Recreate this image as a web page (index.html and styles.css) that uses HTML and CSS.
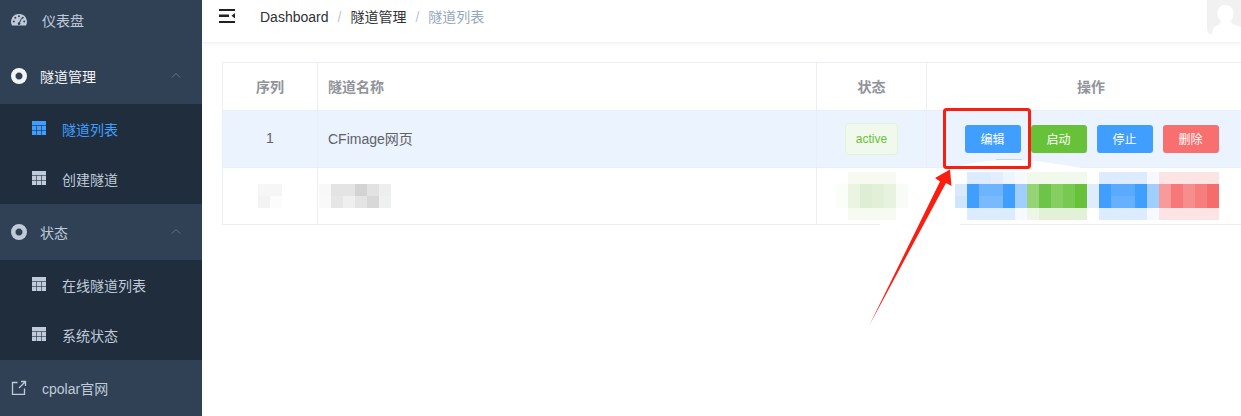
FILE: index.html
```html
<!DOCTYPE html>
<html lang="zh-CN">
<head>
    <meta charset="UTF-8">
    <meta name="viewport" content="width=device-width, initial-scale=1.0">
    <title>隧道列表</title>
    <link rel="stylesheet" href="styles.css">
</head>
<body>
    <div class="sidebar">
        <a class="menu-item" href="#dashboard">
            <svg class="menu-icon" viewBox="0 0 16 16"><path fill-rule="evenodd" d="M8 2a7.500 7.500 0 0 0-8 7.500c0 1.500.4 2.800 1 4h14c.6-1.200 1-2.500 1-4A7.500 7.500 0 0 0 8 2zM8 3.300a1 1 0 1 1 0 2 1 1 0 0 1 0-2zM4.300 4.800a1 1 0 1 1 0 2 1 1 0 0 1 0-2zM11.700 4.800a1 1 0 1 1 0 2 1 1 0 0 1 0-2zM2.800 8.500a1 1 0 1 1 0 2 1 1 0 0 1 0-2zM13.200 8.500a1 1 0 1 1 0 2 1 1 0 0 1 0-2zM10.200 6l.8.4-2 4.300a1.300 1.300 0 1 1-.9-.4z"/></svg>
            <span>仪表盘</span>
        </a>

        <div class="menu-title active-title">
            <svg class="menu-icon" viewBox="0 0 16 16"><path fill-rule="evenodd" d="M8 0a8 8 0 1 0 0 16A8 8 0 0 0 8 0zM8 4.500a3.500 3.500 0 1 1 0 7 3.500 3.500 0 0 1 0-7z"/><path class="buoy-band" d="M3 1.800 5.800 5.600 5 6.200 1.600 3.400zM13 1.800 10.200 5.600 11 6.200 14.400 3.400zM3 14.200 5.800 10.400 5 9.800 1.600 12.600zM13 14.200 10.200 10.400 11 9.800 14.400 12.600z"/></svg>
            <span>隧道管理</span>
            <svg class="chevron" viewBox="0 0 10 5"><path d="M.5 4.700 5 .6l4.500 4.100"/></svg>
        </div>
        <div class="submenu">
            <a class="sub-item current" href="#list">
                <svg class="table-icon" viewBox="0 0 14 14"><path d="M0 0h14v14H0z"/><path class="grid-line" d="M0 4.500h14M0 9.500h14M4.500 4.500V14M9.500 4.500V14"/></svg>
                <span>隧道列表</span>
            </a>
            <a class="sub-item" href="#create">
                <svg class="table-icon" viewBox="0 0 14 14"><path d="M0 0h14v14H0z"/><path class="grid-line" d="M0 4.500h14M0 9.500h14M4.500 4.500V14M9.500 4.500V14"/></svg>
                <span>创建隧道</span>
            </a>
        </div>

        <div class="menu-title">
            <svg class="menu-icon" viewBox="0 0 16 16"><path fill-rule="evenodd" d="M8 0a8 8 0 1 0 0 16A8 8 0 0 0 8 0zM8 4.500a3.500 3.500 0 1 1 0 7 3.500 3.500 0 0 1 0-7z"/><path class="buoy-band" d="M3 1.800 5.800 5.600 5 6.200 1.600 3.400zM13 1.800 10.200 5.600 11 6.200 14.400 3.400zM3 14.200 5.800 10.400 5 9.800 1.600 12.600zM13 14.200 10.200 10.400 11 9.800 14.400 12.600z"/></svg>
            <span>状态</span>
            <svg class="chevron" viewBox="0 0 10 5"><path d="M.5 4.700 5 .6l4.500 4.100"/></svg>
        </div>
        <div class="submenu">
            <a class="sub-item" href="#online">
                <svg class="table-icon" viewBox="0 0 14 14"><path d="M0 0h14v14H0z"/><path class="grid-line" d="M0 4.500h14M0 9.500h14M4.500 4.500V14M9.500 4.500V14"/></svg>
                <span>在线隧道列表</span>
            </a>
            <a class="sub-item" href="#status">
                <svg class="table-icon" viewBox="0 0 14 14"><path d="M0 0h14v14H0z"/><path class="grid-line" d="M0 4.500h14M0 9.500h14M4.500 4.500V14M9.500 4.500V14"/></svg>
                <span>系统状态</span>
            </a>
        </div>

        <a class="menu-item" href="#cpolar">
            <svg class="menu-icon link-icon" viewBox="0 0 16 16"><path d="M6.500 2.500H1.500v11.800h12V8.500M8 8l6.500-6.500M10 1.500h4.500V6"/></svg>
            <span>cpolar官网</span>
        </a>
    </div>

    <div class="main">
        <div class="navbar">
            <svg class="hamburger" viewBox="0 0 16 14"><path d="M0 0h16v2H0zM0 5.500h10v2.500H0zM0 12h16v2H0zM16 4v5.500l-3.500-2.700z"/></svg>
            <div class="breadcrumb">
                <span>Dashboard</span><i>/</i><span>隧道管理</span><i>/</i><span class="last">隧道列表</span>
            </div>
            <svg class="avatar" viewBox="0 0 34 35"><path d="M0 0h34v35H6a6 6 0 0 1-6-6z" fill="#f1f1f1"/><path d="M18 5c-5 0-7.500 3.500-7.500 8 0 3 1 6 3 8 .6 2.500-2 4-4.500 5-2.500 1-3.500 3-4 7l-.3 2H34v-8c-3-1.500-9.500-2-10.500-6 2-2 3-5 3-8 0-4.500-3.500-8-8.500-8z" fill="#fff"/></svg>
        </div>

        <div class="content">
            <table class="tunnel-table">
                <colgroup>
                    <col class="col-index"><col class="col-name"><col class="col-state"><col class="col-actions">
                </colgroup>
                <thead>
                    <tr>
                        <th>序列</th>
                        <th class="left">隧道名称</th>
                        <th>状态</th>
                        <th>操作</th>
                    </tr>
                </thead>
                <tbody>
                    <tr class="highlight">
                        <td>1</td>
                        <td class="left">CFimage网页</td>
                        <td class="tag-cell"><span class="tag">active</span></td>
                        <td>
                            <div class="actions">
                                <button type="button" class="btn blue">编辑</button>
                                <button type="button" class="btn green">启动</button>
                                <button type="button" class="btn blue">停止</button>
                                <button type="button" class="btn red">删除</button>
                            </div>
                        </td>
                    </tr>
                    <tr class="blurred">
                        <td>
                            <svg class="mosaic" width="24" height="24" viewBox="0 0 2 2"><path fill="#f6f6f6" d="M0 0h2v1H0z"/><path fill="#f3f3f3" d="M0 1h1v1H0z"/><path fill="#fbfcfb" d="M1 1h1v1H1z"/></svg>
                        </td>
                        <td class="name-blur">
                            <svg class="mosaic" width="72" height="24" viewBox="0 0 6 2"><path fill="#f8f8f8" d="M0 0h1v1H0z"/><path fill="#e4e4e4" d="M1 0h2v1H1z"/><path fill="#d3d3d3" d="M3 0h1v1H3z"/><path fill="#e2e2e2" d="M4 0h1v1H4z"/><path fill="#eeeeee" d="M5 0h1v1H5z"/><path fill="#f9f9f9" d="M0 1h1v1H0z"/><path fill="#e6e6e6" d="M1 1h1v1H1z"/><path fill="#efefef" d="M2 1h1v1H2z"/><path fill="#e4e4e4" d="M3 1h1v1H3z"/><path fill="#d8d8d8" d="M4 1h1v1H4z"/><path fill="#eff0f0" d="M5 1h1v1H5z"/></svg>
                        </td>
                        <td>
                            <svg class="mosaic" width="72" height="48" viewBox="0 0 6 4"><path fill="#f6faf1" d="M1 0h4v1H1zM1 3h4v1H1z"/><path fill="#fbfdf9" d="M0 1h1v2H0z"/><path fill="#eaf4e1" d="M1 1h1v2H1z"/><path fill="#deeed4" d="M2 1h1v2H2z"/><path fill="#e2f0d8" d="M3 1h1v2H3z"/><path fill="#e8f3df" d="M4 1h1v2H4z"/><path fill="#f9fcf6" d="M5 1h1v2H5z"/></svg>
                        </td>
                        <td class="actions-blur">
                            <svg class="mosaic" width="264" height="48" viewBox="0 0 22 4">
                                <path fill="#dcebfd" d="M1 0h2v1H1zM12 0h4v1h-4zM1 3h4v1H1zM12 3h4v1h-4z"/>
                                <path fill="#e2eefd" d="M3 0h1v1H3z"/>
                                <path fill="#edf5fe" d="M4 0h1v1H4z"/>
                                <path fill="#f6fafe" d="M5 0h1v1H5zM16 0h1v1h-1zM5 3h1v1H5zM16 3h1v1h-1z"/>
                                <path fill="#f1f8ec" d="M6 0h5v1H6z"/>
                                <path fill="#e3f1d9" d="M7 3h4v1H7z"/>
                                <path fill="#edf6e7" d="M6 3h1v1H6z"/>
                                <path fill="#fde4e4" d="M17 0h5v1h-5zM17 3h5v1h-5z"/>
                                <path fill="#d8e9fd" d="M0 1h1v1H0z"/>
                                <path fill="#cfe4fd" d="M0 2h1v1H0z"/>
                                <path fill="#409eff" d="M1 1h1v2H1zM4 1h1v2H4zM12 1h1v2h-1zM15 1h1v2h-1z"/>
                                <path fill="#6db4ff" d="M2 1h2v1H2z"/>
                                <path fill="#79baff" d="M2 2h2v1H2z"/>
                                <path fill="#a0cfff" d="M5 1h1v2H5zM16 1h1v2h-1z"/>
                                <path fill="#95d475" d="M6 1h1v2H6z"/>
                                <path fill="#6ec449" d="M7 1h1v2H7z"/>
                                <path fill="#85cf60" d="M8 1h1v2H8z"/>
                                <path fill="#77c951" d="M9 1h1v2H9z"/>
                                <path fill="#67c23a" d="M10 1h1v2h-1z"/>
                                <path fill="#deecfc" d="M11 1h1v2h-1z"/>
                                <path fill="#5aabff" d="M13 1h2v1h-2z"/>
                                <path fill="#66b1ff" d="M13 2h2v1h-2z"/>
                                <path fill="#f99a9a" d="M17 1h1v2h-1z"/>
                                <path fill="#f67878" d="M18 1h1v2h-1z"/>
                                <path fill="#f78e8e" d="M19 1h1v2h-1z"/>
                                <path fill="#f67e7e" d="M20 1h1v2h-1z"/>
                                <path fill="#f56c6c" d="M21 1h1v2h-1z"/>
                            </svg>
                        </td>
                    </tr>
                </tbody>
            </table>
        </div>
    </div>

    <!-- annotation drawn on top of the screenshot -->
    <svg class="annotation" width="1241" height="416" viewBox="0 0 1241 416">
        <path fill="#fff" d="M948 171C960 164 982 160 1010 160 1040 160 1060 165 1082 168H1241V171zM880 222H960V226H880z"/>
        <path fill="#bcd7fb" d="M996 159h26v1h-26z"/>
        <rect x="944.500" y="109.500" width="85" height="58" rx="2" fill="none" stroke="#fb1d10" stroke-width="3"/>
        <path fill="#fb1d10" d="M869.500 325 940 181.500 935 178 950 169.500 951.500 186 946 183z"/>
    </svg>
</body>
</html>
```

FILE: styles.css
```css
body {
    margin: 0;
    height: 100vh;
    display: flex;
    overflow: hidden;
    font-family: "Liberation Sans", "Noto Sans CJK SC", sans-serif;
    font-size: 14px;
    background-color: #ffffff;
}

a {
    text-decoration: none;
}

/* sidebar */

.sidebar {
    width: 202px;
    flex-shrink: 0;
    margin-top: -8px;
    background-color: #304156;
    color: #bfcbd9;
}

.menu-item,
.menu-title {
    height: 56px;
    display: flex;
    align-items: center;
    color: #bfcbd9;
    padding-left: 11px;
}

.menu-item span {
    margin-left: 15px;
}

.menu-title span {
    margin-left: 13px;
}

.active-title {
    color: #f4f4f5;
}

.menu-icon {
    width: 16px;
    height: 16px;
    fill: currentColor;
    flex-shrink: 0;
}

.buoy-band {
    fill: currentColor;
    opacity: 0.75;
}

.link-icon {
    fill: none;
    stroke: currentColor;
    stroke-width: 1.300;
}

.chevron {
    width: 10px;
    height: 5px;
    margin-left: auto;
    margin-right: 21px;
    margin-bottom: 2px;
    fill: none;
    stroke: #5e6e82;
    stroke-width: 1;
}

.submenu {
    background-color: #1f2d3d;
}

.sub-item {
    height: 50px;
    display: flex;
    align-items: center;
    padding-left: 32px;
    color: #bfcbd9;
}

.sub-item span {
    margin-left: 16px;
    margin-bottom: 1px;
}

.sub-item.current {
    color: #409eff;
}

.table-icon {
    width: 14px;
    height: 14px;
    margin-top: -2px;
    fill: currentColor;
    flex-shrink: 0;
}

.grid-line {
    fill: none;
    stroke: #1f2d3d;
    stroke-width: 1;
    stroke-opacity: 0.6;
}

/* header */

.main {
    flex-grow: 1;
    min-width: 0;
    overflow: hidden;
}

.navbar {
    height: 42px;
    box-sizing: border-box;
    display: flex;
    align-items: flex-start;
    padding-top: 9px;
    padding-left: 17px;
    box-shadow: 0 1px 4px rgba(0, 21, 41, 0.08);
    position: relative;
}

.hamburger {
    width: 16px;
    height: 14px;
    fill: #222222;
    flex-shrink: 0;
}

.breadcrumb {
    margin-left: 25px;
    line-height: 16px;
    color: #303133;
}

.breadcrumb i {
    font-style: normal;
    margin: 0 9px;
    color: #c0c4cc;
}

.breadcrumb .last {
    color: #97a8be;
}

.avatar {
    width: 34px;
    height: 35px;
    margin-left: auto;
    margin-top: -9px;
}

/* table */

.content {
    padding: 20px 0 0 20px;
}

.tunnel-table {
    width: 1034px;
    table-layout: fixed;
    border-collapse: separate;
    border-spacing: 0;
    border-top: 1px solid #ebeef5;
    border-left: 1px solid #ebeef5;
    color: #606266;
}

.col-index { width: 95px; }
.col-name { width: 499px; }
.col-state { width: 110px; }
.col-actions { width: 329px; }

.tunnel-table th,
.tunnel-table td {
    padding: 0;
    text-align: center;
    border-right: 1px solid #ebeef5;
    border-bottom: 1px solid #ebeef5;
}

.tunnel-table th {
    height: 45px;
    padding-bottom: 2px;
    color: #909399;
    font-size: 14px;
    font-weight: bold;
}

.tunnel-table td {
    height: 56px;
}

.tunnel-table .highlight td {
    height: 54px;
    padding-bottom: 2px;
    background-color: #ebf3fe;
}

.tunnel-table .highlight .tag-cell {
    height: 56px;
    padding-bottom: 0;
}

.tunnel-table .left {
    text-align: left;
    padding-left: 10px;
}

.blurred td:nth-child(3),
.blurred td:nth-child(4) {
    border-right-color: #ffffff;
}

.tunnel-table .name-blur {
    text-align: left;
    padding-left: 1px;
}

.tunnel-table .actions-blur {
    text-align: left;
    padding-left: 28px;
}

.mosaic {
    display: block;
    margin: 0 auto;
    shape-rendering: crispEdges;
}

.name-blur .mosaic,
.actions-blur .mosaic {
    margin: 0;
}

.tag {
    display: inline-block;
    box-sizing: border-box;
    height: 32px;
    line-height: 30px;
    padding: 0 10px;
    font-size: 12px;
    color: #67c23a;
    background-color: #f0f9eb;
    border: 1px solid #e1f3d8;
    border-radius: 4px;
}

.actions {
    display: flex;
    justify-content: center;
    gap: 10px;
    padding-left: 1px;
    padding-top: 2px;
}

.btn {
    width: 56px;
    height: 28px;
    padding: 0 0 2px;
    border: none;
    border-radius: 3px;
    font-family: inherit;
    font-size: 12px;
    color: #ffffff;
}

.btn.blue { background-color: #409eff; }
.btn.green { background-color: #67c23a; }
.btn.red { background-color: #f76f6f; }

/* red box and arrow */

.annotation {
    position: absolute;
    left: 0;
    top: 0;
    pointer-events: none;
}
```
